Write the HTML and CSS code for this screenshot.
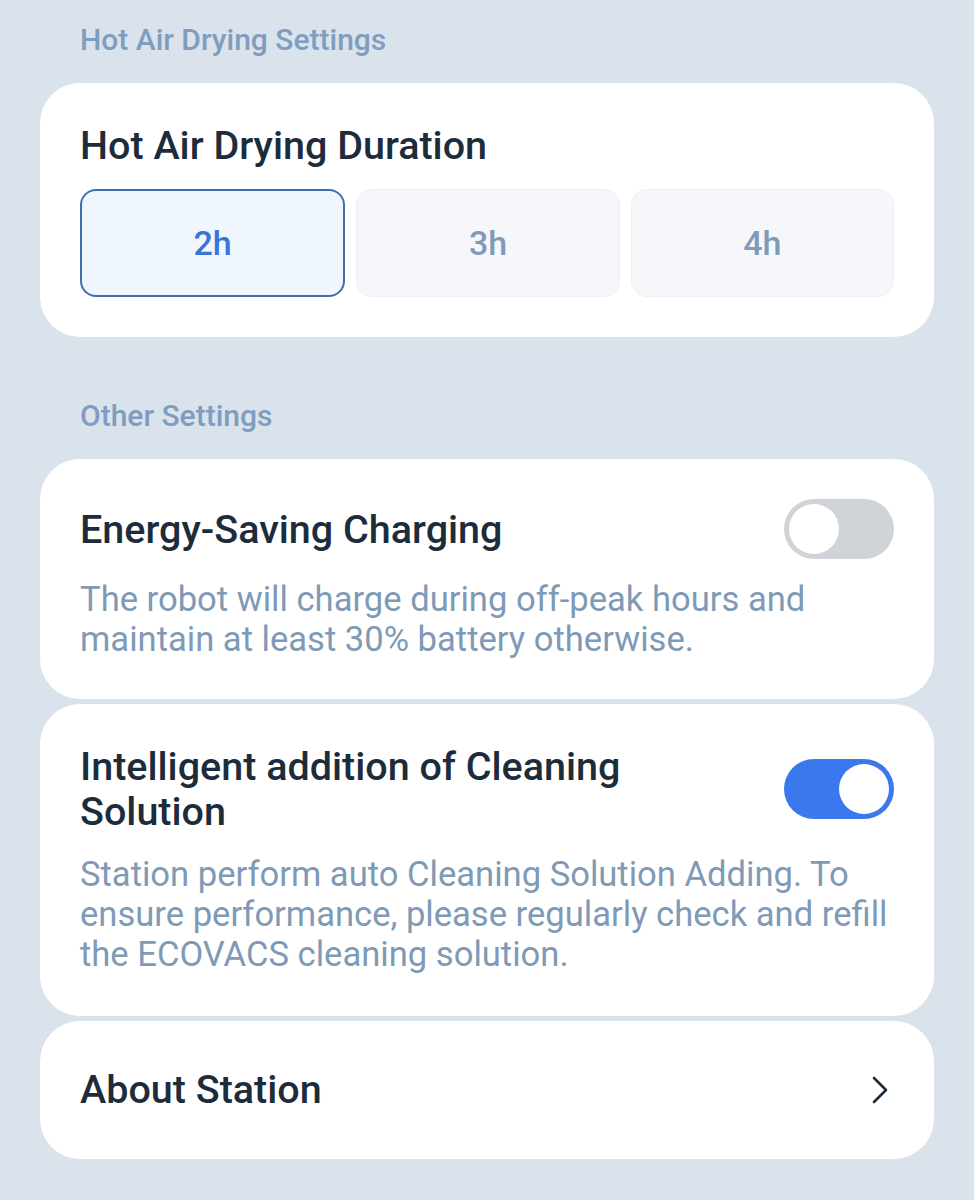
FILE: index.html
```html
<!DOCTYPE html>
<html lang="en">
<head>
<meta charset="utf-8">
<title>Station Settings</title>
<link rel="stylesheet" href="styles.css">
</head>
<body>
<div class="page">
  <div class="section-title first">Hot Air Drying Settings</div>
  <div class="card">
    <div class="card-title">Hot Air Drying Duration</div>
    <div class="options">
      <div class="option selected">2h</div>
      <div class="option">3h</div>
      <div class="option">4h</div>
    </div>
  </div>

  <div class="section-title">Other Settings</div>
  <div class="card">
    <div class="row">
      <div class="card-title">Energy-Saving Charging</div>
      <div class="toggle"><div class="knob"></div></div>
    </div>
    <div class="desc">The robot will charge during off-peak hours and maintain at least 30% battery otherwise.</div>
  </div>

  <div class="card stacked tall">
    <div class="row">
      <div class="card-title">Intelligent addition of Cleaning Solution</div>
      <div class="toggle on"><div class="knob"></div></div>
    </div>
    <div class="desc">Station perform auto Cleaning Solution Adding. To ensure performance, please regularly check and refill the ECOVACS cleaning solution.</div>
  </div>

  <div class="card stacked link">
    <div class="row">
      <div class="card-title">About Station</div>
      <svg class="chevron" width="20" height="30" viewBox="0 0 20 30"><path d="M4 3 L16 15 L4 27" fill="none" stroke="#1c2b3a" stroke-width="2.6" stroke-linecap="round" stroke-linejoin="round"/></svg>
    </div>
  </div>
</div>
</body>
</html>
```

FILE: styles.css
```css
html, body {
  margin: 0;
  padding: 0;
  background: #dae2ec;
}
body {
  font-family: Roboto, "Noto Sans", "Liberation Sans", sans-serif;
  color: #1c2b3a;
}
.page {
  padding: 0 40px 40px;
}
.section-title {
  font-size: 30px;
  font-weight: 500;
  line-height: 34px;
  color: #7f9dbf;
  padding: 0 40px;
  margin-top: 62px;
  margin-bottom: 26px;
}
.section-title.first {
  margin-top: 23px;
}
.card {
  background: #ffffff;
  border-radius: 40px;
  padding: 40px;
}
.card.stacked {
  margin-top: 5px;
}
.card.tall {
  padding-bottom: 42px;
}
.card.link {
  padding: 46px 44px 46px 40px;
}
.card-title {
  font-size: 39.5px;
  font-weight: 500;
  line-height: 45px;
  color: #1d2c3b;
}
.link .card-title {
  line-height: 46px;
}
.options {
  display: flex;
  gap: 11px;
  margin-top: 21px;
}
.option {
  flex: 1;
  height: 108px;
  box-sizing: border-box;
  border-radius: 16px;
  background: #f5f7fa;
  border: 1.5px solid #edf0f3;
  display: flex;
  align-items: center;
  justify-content: center;
  font-size: 34px;
  font-weight: 500;
  color: #7f9bb9;
}
.option.selected {
  background: #eff6fe;
  border: 2px solid #3f6fae;
  color: #3a74d6;
}
.row {
  display: flex;
  align-items: center;
  justify-content: space-between;
  gap: 20px;
}
.toggle {
  flex: none;
  width: 110px;
  height: 60px;
  border-radius: 30px;
  background: #d0d4d9;
  box-sizing: border-box;
  padding: 5px;
  display: flex;
  justify-content: flex-start;
}
.toggle.on {
  background: #3a78ed;
  justify-content: flex-end;
}
.knob {
  width: 50px;
  height: 50px;
  border-radius: 50%;
  background: #ffffff;
}
.desc {
  margin-top: 20px;
  margin-right: -10px;
  font-size: 34.6px;
  line-height: 40px;
  color: #7e9ab6;
}
.chevron {
  flex: none;
  display: block;
}
```
